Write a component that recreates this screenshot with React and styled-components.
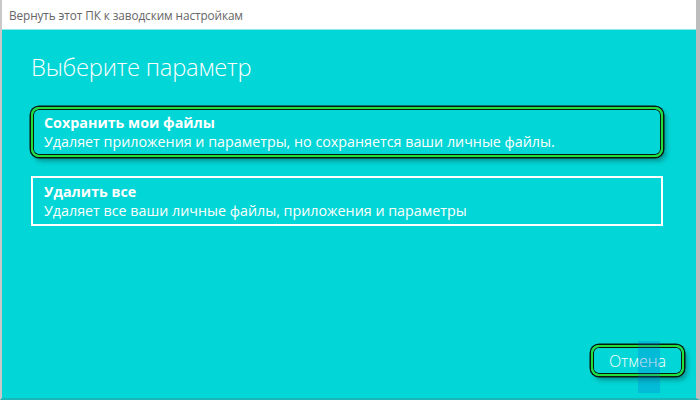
import React from "react";
import styled, { createGlobalStyle } from "styled-components";

const GlobalStyle = createGlobalStyle`
  html, body {
    margin: 0;
    padding: 0;
    background: #ffffff;
  }
  body {
    font-family: "Open Sans", "Noto Sans", "DejaVu Sans", sans-serif;
  }
`;

const Window = styled.div`
  width: 700px;
  height: 400px;
  box-sizing: border-box;
  display: flex;
  flex-direction: column;
  border-left: 2px solid #c9c9c9;
  border-right: 4px solid #bdbdbd;
  border-bottom: 2px solid #19b7b7;
  background: #03d6d6;
  overflow: hidden;
`;

const TitleBar = styled.div`
  height: 30px;
  flex: 0 0 30px;
  box-sizing: border-box;
  background: #ffffff;
  border-bottom: 1px solid #8ee8e8;
  display: flex;
  align-items: center;
  padding-left: 7px;
  font-size: 11.8px;
  color: #666666;
  letter-spacing: -0.1px;
`;

const Content = styled.div`
  flex: 1;
  display: flex;
  flex-direction: column;
  padding: 21px 12px 22px 29px;
  color: #ffffff;
`;

const Heading = styled.h1`
  margin: 0 0 24px 0;
  font-size: 23.7px;
  line-height: 32px;
  font-weight: 300;
  letter-spacing: -0.2px;
`;

const Options = styled.div`
  display: flex;
  flex-direction: column;
  gap: 19px;
  width: 632px;
`;

const Option = styled.div`
  height: 50px;
  box-sizing: border-box;
  border: 2px solid ${(p) => (p.$selected ? "#22e03c" : "#ffffff")};
  border-radius: ${(p) => (p.$selected ? "8px" : "0")};
  box-shadow: ${(p) =>
    p.$selected
      ? "0 0 0 1.5px #0b1a0e, inset 0 0 0 1px #0b1a0e, 3px 4px 5px rgba(0,60,60,0.45)"
      : "none"};
  padding: 4px 11px 0 11px;
  display: flex;
  flex-direction: column;
  font-size: 14.3px;
  line-height: 19px;
`;

const OptionTitle = styled.div`
  font-weight: 700;
`;

const OptionText = styled.div`
  font-weight: 400;
`;

const Footer = styled.div`
  margin-top: auto;
  display: flex;
  justify-content: flex-end;
`;

const CancelButton = styled.button`
  position: relative;
  width: 93px;
  height: 31px;
  border: 2px solid #22e03c;
  border-radius: 8px;
  background: transparent;
  box-shadow: 0 0 0 1.5px #0b1a0e, inset 0 0 0 1px #0b1a0e,
    3px 4px 5px rgba(0, 60, 60, 0.45);
  color: #ffffff;
  font-family: "Open Sans", "Noto Sans", sans-serif;
  font-size: 16px;
  font-weight: 300;
  padding: 0;
`;

const CursorMark = styled.span`
  position: absolute;
  left: 45px;
  top: -6px;
  width: 22px;
  height: 52px;
  background: rgba(10, 90, 220, 0.22);
  pointer-events: none;
`;

export default function App() {
  return (
    <>
      <GlobalStyle />
      <Window>
        <TitleBar>Вернуть этот ПК к заводским настройкам</TitleBar>
        <Content>
          <Heading>Выберите параметр</Heading>
          <Options>
            <Option $selected>
              <OptionTitle>Сохранить мои файлы</OptionTitle>
              <OptionText>
                Удаляет приложения и параметры, но сохраняется ваши личные файлы.
              </OptionText>
            </Option>
            <Option>
              <OptionTitle>Удалить все</OptionTitle>
              <OptionText>
                Удаляет все ваши личные файлы, приложения и параметры
              </OptionText>
            </Option>
          </Options>
          <Footer>
            <CancelButton>
              Отмена
              <CursorMark />
            </CancelButton>
          </Footer>
        </Content>
      </Window>
    </>
  );
}
